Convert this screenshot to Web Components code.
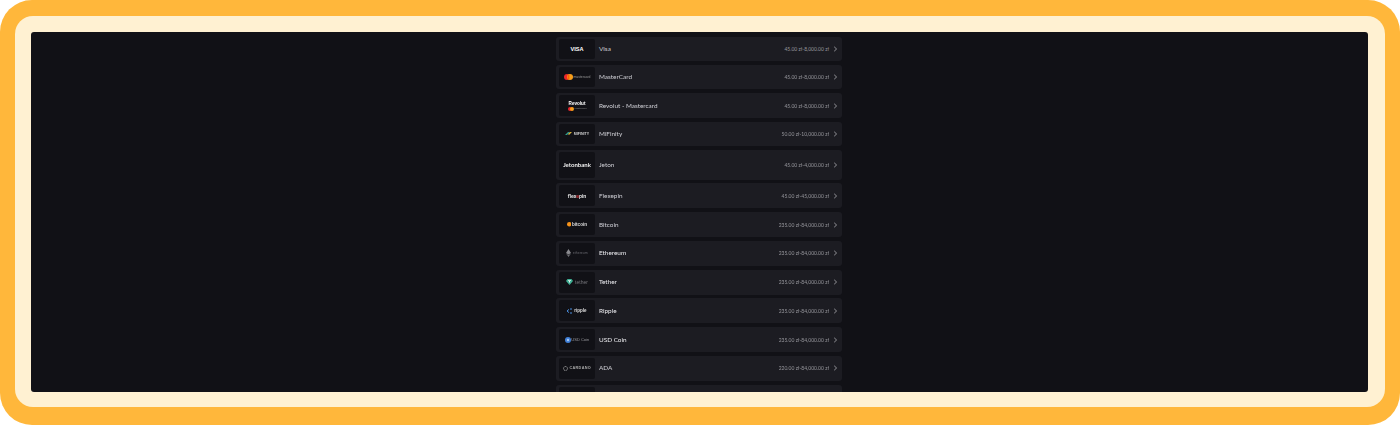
<!DOCTYPE html>
<html>
<head>
<meta charset="utf-8">
<title>Payment methods</title>
<style>
  html, body { margin: 0; background: #fff; }
</style>
</head>
<body>
<app-frame>
  <pay-row name="Visa" limit="45.00 zł-8,000.00 zł" h="23.6"><span slot="logo" style="font:800 5.6px 'Liberation Sans',sans-serif;color:#fff">VISA</span></pay-row>
  <pay-row name="MasterCard" limit="45.00 zł-8,000.00 zł" h="24.6"><span slot="logo" style="display:flex;align-items:center;gap:1px"><svg width="9" height="6" viewBox="0 0 9 6"><circle cx="3" cy="3" r="3" fill="#e8262b"/><circle cx="6" cy="3" r="3" fill="#f79e1b"/><rect x="3.6" y="1" width="1.8" height="4" fill="#ff5f00"/></svg><span style="font:400 3.4px 'Liberation Sans',sans-serif;color:#999">mastercard</span></span></pay-row>
  <pay-row name="Revolut - Mastercard" limit="45.00 zł-8,000.00 zł" h="25"><span slot="logo" style="display:flex;flex-direction:column;align-items:center;line-height:6px"><span style="font:700 4.6px/6px 'Liberation Sans',sans-serif;color:#fff">Revolut</span><span style="display:flex;align-items:center;gap:1px"><svg width="6" height="4" viewBox="0 0 6 4"><circle cx="2" cy="2" r="2" fill="#e8262b"/><circle cx="4" cy="2" r="2" fill="#f79e1b"/></svg><span style="font:400 2.4px 'Liberation Sans',sans-serif;color:#888">mastercard</span></span></span></pay-row>
  <pay-row name="MiFinity" limit="50.00 zł-10,000.00 zł" h="24"><span slot="logo" style="display:flex;align-items:center;gap:2px"><svg width="7" height="5" viewBox="0 0 7 5"><path d="M0 4 3 1h2L2 4z" fill="#2f9c8b"/><path d="M4 4 7 1 5 1 3 3z" fill="#d9b23c"/></svg><span style="font:800 3.6px 'Liberation Sans',sans-serif;color:#ccc">MIFINITY</span></span></pay-row>
  <pay-row name="Jeton" limit="45.00 zł-4,000.00 zł" h="30"><span slot="logo" style="font:700 6px 'Lato',sans-serif;color:#eee">Jetonbank</span></pay-row>
  <pay-row name="Flexepin" limit="45.00 zł-45,000.00 zł" h="25"><span slot="logo" style="font:700 5.2px 'Lato',sans-serif;color:#eee">flex<span style="color:#d8343a">e</span>pin</span></pay-row>
  <pay-row name="Bitcoin" limit="235.00 zł-84,000.00 zł" h="25"><span slot="logo" style="display:flex;align-items:center;gap:.5px"><svg width="4.5" height="4.5" viewBox="0 0 5 5"><circle cx="2.5" cy="2.5" r="2.5" fill="#f7931a"/></svg><span style="font:700 4.6px 'Liberation Sans',sans-serif;color:#ddd">bitcoin</span></span></pay-row>
  <pay-row name="Ethereum" limit="235.00 zł-84,000.00 zł" h="25" bright><span slot="logo" style="display:flex;align-items:center;gap:1.5px"><svg width="5" height="8" viewBox="0 0 5 8"><path d="M2.5 0 5 4 2.5 5.4 0 4z" fill="#8a8a8f"/><path d="M2.5 6 5 4.6 2.5 8 0 4.6z" fill="#6d6d72"/></svg><span style="font:400 3.5px 'Liberation Sans',sans-serif;color:#66666c">ethereum</span></span></pay-row>
  <pay-row name="Tether" limit="235.00 zł-84,000.00 zł" h="25" bright><span slot="logo" style="display:flex;align-items:center;gap:2px"><svg width="7" height="6" viewBox="0 0 7 6"><path d="M1.5 0h4L7 2 3.5 6 0 2z" fill="#3fae93"/><path d="M2 1.2h3v.7H4v1.6H3V1.9H2z" fill="#e6f5f1"/></svg><span style="font:400 5px 'Liberation Sans',sans-serif;color:#77777c">tether</span></span></pay-row>
  <pay-row name="Ripple" limit="235.00 zł-84,000.00 zł" h="25" bright><span slot="logo" style="display:flex;align-items:center;gap:1px"><svg width="6" height="6" viewBox="0 0 6 6"><path d="M0 3 2 1.4M0 3l2 1.6M3 1h2M3 5h2" stroke="#4a8fe0" stroke-width="1" fill="none"/></svg><span style="font:700 4.5px 'Liberation Sans',sans-serif;color:#ddd">ripple</span></span></pay-row>
  <pay-row name="USD Coin" limit="235.00 zł-84,000.00 zł" h="25" bright><span slot="logo" style="display:flex;align-items:center;gap:.5px"><svg width="6" height="6" viewBox="0 0 6 6"><circle cx="3" cy="3" r="3" fill="#3f7fd6"/><circle cx="3" cy="3" r="1.2" fill="#a9c8f0"/></svg><span style="font:400 4px 'Liberation Sans',sans-serif;color:#99999e">USD Coin</span></span></pay-row>
  <pay-row name="ADA" limit="220.00 zł-84,000.00 zł" h="25"><span slot="logo" style="display:flex;align-items:center;gap:1.5px"><svg width="5" height="5" viewBox="0 0 5 5"><circle cx="2.5" cy="2.5" r="2" fill="none" stroke="#aaa" stroke-width="1" stroke-dasharray="1 .6"/></svg><span style="font:700 3.8px 'Liberation Sans',sans-serif;color:#aaa;letter-spacing:.3px">CARDANO</span></span></pay-row>
  <pay-row name="" limit="" h="25"></pay-row>
</app-frame>
<script>
class AppFrame extends HTMLElement {
  constructor() {
    super();
    this.shadow = this.attachShadow({ mode: 'open' });
  }

  connectedCallback() {
    this.shadow.innerHTML = `
      <style>
        :host { display: block; width: 1400px; height: 425px; box-sizing: border-box; background: #ffb73b; border-radius: 32px; padding: 16px 15px 18px 15px; }
        .cream { box-sizing: border-box; height: 391px; background: #fff1d2; border-radius: 18px; padding: 16px 17px 15px 16px; }
        .panel { height: 360px; background: #111116; border-radius: 3px; overflow: hidden; display: flex; justify-content: center; }
        .list { width: 286px; padding-top: 5.4px; margin-right: 1px; display: flex; flex-direction: column; gap: 3.75px; flex: none; filter: blur(.3px); }
      </style>
      <div class="cream"><div class="panel"><div class="list"><slot></slot></div></div></div>
    `;
  }
}

class PayRow extends HTMLElement {
  constructor() {
    super();
    this.shadow = this.attachShadow({ mode: 'open' });
  }

  connectedCallback() {
    this.render();
  }

  render() {
    this.shadow.innerHTML = `
      <style>
        :host { display: flex; flex: none; box-sizing: border-box; height: ${this.getAttribute('h')}px; background: #1c1c22; border-radius: 3px; padding: 2px 3px; align-items: stretch; font-family: 'Lato', 'Noto Sans', sans-serif; }
        .logo { width: 36px; flex: none; background: #111116; border-radius: 2px; display: flex; align-items: center; justify-content: center; white-space: nowrap; overflow: hidden; }
        .name { margin-left: 4px; margin-bottom: 1px; flex: 1; align-self: center; font-size: 6.4px; font-weight: 400; color: ${this.hasAttribute('bright') ? '#eeeef2' : '#d0d0d6'}; white-space: nowrap; }
        .limit { align-self: center; font-size: 5px; color: #96969c; white-space: nowrap; }
        svg.arrow { align-self: center; margin-left: 4px; margin-right: 1px; flex: none; }
      </style>
      <div class="logo"><slot name="logo"></slot></div>
      <span class="name">${this.getAttribute('name')}</span>
      <span class="limit">${this.getAttribute('limit')}</span>
      <svg class="arrow" width="5" height="6" viewBox="0 0 5 6"><path d="M1.2.8 3.6 3 1.2 5.2" fill="none" stroke="#a0a0a6" stroke-width=".9"/></svg>
    `;
  }
}

customElements.define('app-frame', AppFrame);
customElements.define('pay-row', PayRow);
</script>
</body>
</html>
